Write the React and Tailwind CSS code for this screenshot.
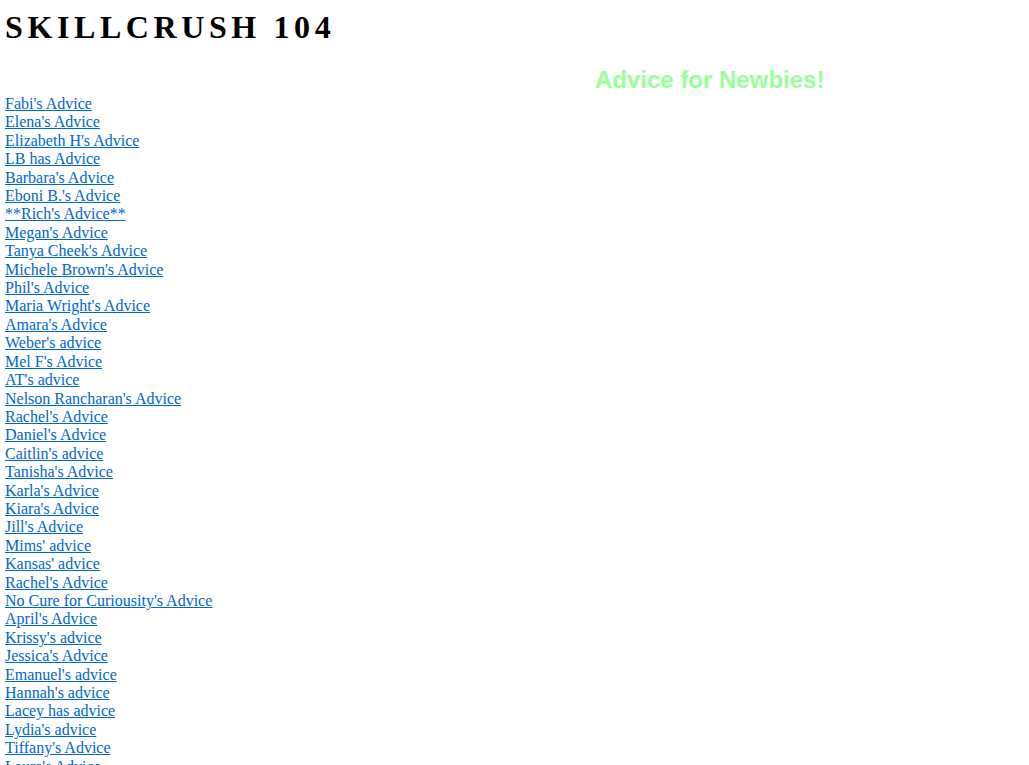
const links = [
  "Fabi's Advice",
  "Elena's Advice",
  "Elizabeth H's Advice",
  "LB has Advice",
  "Barbara's Advice",
  "Eboni B.'s Advice",
  "**Rich's Advice**",
  "Megan's Advice",
  "Tanya Cheek's Advice",
  "Michele Brown's Advice",
  "Phil's Advice",
  "Maria Wright's Advice",
  "Amara's Advice",
  "Weber's advice",
  "Mel F's Advice",
  "AT's advice",
  "Nelson Rancharan's Advice",
  "Rachel's Advice",
  "Daniel's Advice",
  "Caitlin's advice",
  "Tanisha's Advice",
  "Karla's Advice",
  "Kiara's Advice",
  "Jill's Advice",
  "Mims' advice",
  "Kansas' advice",
  "Rachel's Advice",
  "No Cure for Curiousity's Advice",
  "April's Advice",
  "Krissy's advice",
  "Jessica's Advice",
  "Emanuel's advice",
  "Hannah's advice",
  "Lacey has advice",
  "Lydia's advice",
  "Tiffany's Advice",
  "Laura's Advice",
];

export default function App() {
  return (
    <div className="bg-white min-h-screen px-[5px] pt-[9px] text-black">
      <h1 className="font-['Liberation_Serif','Times_New_Roman',serif] text-[32px] font-bold tracking-[4.6px] leading-[37px] m-0">
        SKILLCRUSH 104
      </h1>
      <h2 className="mt-[19px] pl-[590px] font-['Liberation_Sans',Arial,sans-serif] text-[24px] font-bold leading-[29px] text-[#99ff99]">
        Advice for Newbies!
      </h2>
      <div className="mt-[1px] flex flex-col items-start font-['Liberation_Serif','Times_New_Roman',serif] text-[16px] leading-[18.4px]">
        {links.map((l, i) => (
          <a key={i} href="#" className="text-[#0066cc] underline">
            {l}
          </a>
        ))}
      </div>
    </div>
  );
}
